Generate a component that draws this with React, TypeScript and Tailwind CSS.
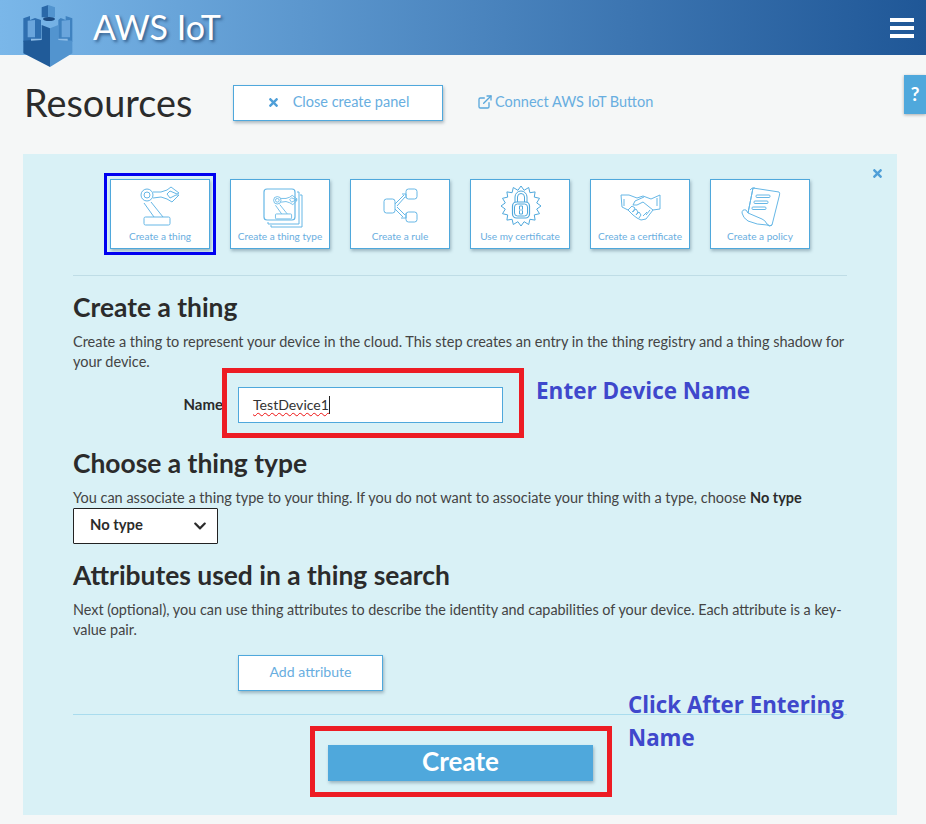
import React from "react";
import { FaTimes, FaChevronDown } from "react-icons/fa";
import { ExternalLink } from "lucide-react";

const font = { fontFamily: 'Lato, "Noto Sans", sans-serif' };

function Logo() {
  return (
    <svg width="70" height="70" viewBox="0 0 210 210" className="absolute left-[15px] top-0">
      <polygon points="80,22 100,15 100,52 80,52" fill="#2a68a8" />
      <polygon points="100,15 120,22 120,52 100,52" fill="#5294cf" />
      <polygon points="25,55 45,48 45,60 60,54 78,60 78,120 25,125" fill="#2f6fb0" />
      <polygon points="172,55 152,48 152,60 137,54 130,60 130,120 172,125" fill="#3f82c0" />
      <polygon points="38,62 60,60 60,112 38,112" fill="#6aa5dc" />
      <polygon points="140,62 165,60 165,112 140,112" fill="#6aa5dc" />
      <polygon points="62,72 78,72 78,112 62,112" fill="#2f6fb0" />
      <ellipse cx="102" cy="57" rx="18" ry="6" fill="#1c4a80" />
      <polygon points="25,122 80,118 80,75 105,85 105,201 25,160" fill="#205b99" />
      <polygon points="105,85 130,75 130,118 172,122 172,160 105,201" fill="#5294cf" />
      <polygon points="48,116 80,116 80,120 48,122" fill="#8fbde6" />
      <polygon points="130,116 158,116 158,122 130,120" fill="#8fbde6" />
    </svg>
  );
}

function RobotIcon() {
  return (
    <g fill="none">
      <circle cx="36" cy="15" r="6" />
      <circle cx="36" cy="15" r="3" />
      <path d="M42 12 L50 12 L56 10 L60 7 L68 13 L66 14 L59 11 L56 14 L59 18 L65 15 L68 15 L61 22 L56 19 L50 17 L42 18" />
      <path d="M33 23 L43 37 M40 22 L52 37" />
      <rect x="33" y="37" width="26" height="8" rx="1.5" />
    </g>
  );
}

function TileIcon({ kind }: { kind: string }) {
  const star = Array.from({ length: 32 }, (_, i) => {
    const a = (i * Math.PI) / 16;
    const r = i % 2 === 0 ? 20 : 16;
    return `${(50 + r * Math.sin(a)).toFixed(1)},${(26 - r * Math.cos(a)).toFixed(1)}`;
  }).join(" ");
  return (
    <svg width="100" height="52" viewBox="0 0 100 52" stroke="#66b7e6" strokeWidth="1" fill="none" className="block">
      {kind === "thing" && <RobotIcon />}
      {kind === "type" && (
        <g>
          <path d="M66 12 L68 12 L68 44 L37 44 L37 42" />
          <path d="M69 15 L71 15 L71 47 L40 47 L40 45" />
          <rect x="33" y="9" width="31" height="31" rx="3" strokeWidth="1.2" />
          <g transform="translate(24 11) scale(0.62)" strokeWidth="1.4">
            <RobotIcon />
          </g>
        </g>
      )}
      {kind === "rule" && (
        <g>
          <rect x="33" y="19" width="11" height="14" rx="2.5" />
          <rect x="55" y="9" width="11" height="10" rx="2.5" />
          <rect x="55" y="32" width="11" height="10" rx="2.5" />
          <path d="M44 24 L53 15 M46 26 L54 17 M51 14 L55 14 L55 18 M46 27 L54 35 M44 29 L52 37 M55 33 L55 38 L50 38" />
        </g>
      )}
      {kind === "cert" && (
        <g stroke="#4fa8dc">
          <polygon points={star} />
          <rect x="41.5" y="22" width="17" height="16" rx="4" strokeWidth="1.2" />
          <rect x="43.5" y="24" width="13" height="12" rx="3" />
          <path d="M44 22 V17 a6 6 0 0 1 12 0 V22 M46.5 22 V17 a3.5 3.5 0 0 1 7 0 V22" />
          <path d="M48.5 26 h3 v3 l-.7 1 .7 1 v3 h-3 v-3 l.7 -1 -.7 -1 z" />
        </g>
      )}
      {kind === "hand" && (
        <g>
          <path d="M30 15 L38 15 L46 18 L52 16 L60 19 L69 15 L69 29 L62 30 L55 39 L50 40 L46 38 L42 35 L37 30 L31 27 Z" />
          <path d="M33 19 L33 26 M66 18 L66 26" />
          <path d="M53 17 L44 21 L42 25 L46 25 L52 22 L62 30" />
          <path d="M37 30 L41 26 L44 28 L42 32 M41 32 L45 29 L47 32 L45 35 M45 35 L48 32 L50 35 L48 38 M56 32 L52 36 M59 30 L55 35" />
        </g>
      )}
      {kind === "policy" && (
        <g>
          <path d="M42 8 L68 12 Q69 13 68.5 15 L61 45 Q59 47 56 44 Q54 40 51 39 L37 33 Z" />
          <path d="M39 10 Q41 7 44 8 M42 8 L37 33 L35 30 Q31 29 31 33 Q32 38 37 41 Q46 45 56 45 Q59 47 61 45" />
          <rect x="45" y="15" width="14" height="2.5" rx="1" />
          <rect x="43" y="21" width="14" height="2.5" rx="1" />
          <rect x="41" y="27" width="14" height="2.5" rx="1" />
        </g>
      )}
    </svg>
  );
}

function Tile({ kind, label, selected }: { kind: string; label: string; selected?: boolean }) {
  return (
    <div className="relative w-[100px] h-[70px] bg-white border border-[#4fa8dc] shadow-[1px_2px_3px_rgba(60,90,110,0.4)] flex flex-col">
      <TileIcon kind={kind} />
      <div className="text-[10.1px] leading-[14px] mt-[-3px] text-center text-[#6aaee0] whitespace-nowrap">{label}</div>
      {selected && <div className="absolute left-[-7px] top-[-7px] w-[112px] h-[82px] border-[3px] border-[#0000f0]" />}
    </div>
  );
}

const annot = { fontFamily: '"Open Sans", "Noto Sans", sans-serif' };

export default function App() {
  return (
    <div style={font} className="relative w-[926px] h-[824px] overflow-hidden bg-[#f5f7f7] text-[#2b2b2b]">
      <header className="relative h-[55px] flex items-center justify-between pl-[93px] pr-[12px] bg-gradient-to-r from-[#7ab7e9] to-[#1f5797]">
        <Logo />
        <div className="text-[34px] leading-[40px] text-white [text-shadow:2px_2px_3px_rgba(20,50,90,0.6)] pb-[2px]">AWS IoT</div>
        <div className="flex flex-col gap-[4px]">
          <div className="w-[24px] h-[4px] bg-white" />
          <div className="w-[24px] h-[4px] bg-white" />
          <div className="w-[24px] h-[4px] bg-white" />
        </div>
      </header>

      <div className="absolute right-0 top-[75px] w-[22px] h-[39px] bg-[#4fa8dc] shadow-[0_1px_3px_rgba(0,0,0,0.3)] flex items-center justify-center text-white font-bold text-[19px]">?</div>

      <div className="flex items-center h-[36px] mt-[30px] ml-[24px]">
        <h1 className="w-[209px] text-[37.8px] leading-[40px] text-[#2b2b2b]">Resources</h1>
        <button className="w-[210px] h-[36px] bg-white border border-[#4fa8dc] shadow-[1px_2px_3px_rgba(60,90,110,0.4)] flex items-center justify-center gap-[13px] text-[14.5px] pb-[2px] text-[#68aee0]">
          <FaTimes className="text-[#4f9fd8] text-[13px]" />
          <span>Close create panel</span>
        </button>
        <a className="ml-[34px] flex items-center gap-[2px] text-[14.5px] pb-[2px] text-[#68aee0]">
          <ExternalLink size={16} strokeWidth={2} className="text-[#5aa8dc]" />
          <span>Connect AWS IoT Button</span>
        </a>
      </div>

      <main className="relative mt-[33px] mx-[23px] w-[874px] h-[661px] bg-[#d9f1f6] px-[50px] pt-[25px]">
        <FaTimes className="absolute left-[848px] top-[13px] text-[#4f9fd8] text-[13px]" />
        <div className="flex justify-center gap-[20px]">
          <Tile kind="thing" label="Create a thing" selected />
          <Tile kind="type" label="Create a thing type" />
          <Tile kind="rule" label="Create a rule" />
          <Tile kind="cert" label="Use my certificate" />
          <Tile kind="hand" label="Create a certificate" />
          <Tile kind="policy" label="Create a policy" />
        </div>
        <hr className="mt-[26px] border-0 h-px bg-[#bfdde6]" />

        <h2 className="mt-[17px] h-[30px] text-[26.4px] leading-[28px] font-bold">Create a thing</h2>
        <p className="mt-[9px] text-[14.5px] leading-[20px] text-[#444]">
          Create a thing to represent your device in the cloud. This step creates an entry in the thing registry and a thing shadow for your device.
        </p>

        <div className="relative mt-[15px] flex items-center gap-[15px]">
          <label className="w-[150px] text-right text-[15px] font-bold pb-[2px]">Name</label>
          <div className="w-[265px] h-[36px] bg-white border border-[#4fa8dc] pl-[14px] flex items-center text-[14.1px] text-[#333]">
            <span className="underline decoration-wavy decoration-[#e11] decoration-1 underline-offset-2">TestDevice1</span>
            <span className="w-px h-[18px] bg-[#222]" />
          </div>
          <div className="absolute left-[149px] top-[-19px] w-[302px] h-[70px] border-[5px] border-[#ed1c24]" />
          <div style={annot} className="absolute left-[463px] top-[-13px] text-[22.5px] leading-[34px] font-bold text-[#3f48cc] whitespace-nowrap">Enter Device Name</div>
        </div>

        <h2 className="mt-[26px] h-[30px] text-[26.4px] leading-[28px] font-bold">Choose a thing type</h2>
        <p className="mt-[9px] text-[14.5px] leading-[20px] text-[#444]">
          You can associate a thing type to your thing. If you do not want to associate your thing with a type, choose <b className="text-[#2b2b2b]">No type</b>
        </p>
        <div className="w-[145px] h-[36px] bg-white border border-[#222] rounded-[1px] flex items-center justify-between pl-[16px] pr-[10px] text-[14.8px] font-bold">
          <span className="pb-[3px]">No type</span>
          <FaChevronDown className="text-[14px]" />
        </div>

        <h2 className="mt-[17px] h-[30px] text-[26.4px] leading-[28px] font-bold">Attributes used in a thing search</h2>
        <p className="mt-[9px] text-[14.4px] leading-[20px] text-[#444]">
          Next (optional), you can use thing attributes to describe the identity and capabilities of your device. Each attribute is a key-value pair.
        </p>
        <button className="mt-[15px] ml-[165px] block w-[145px] h-[36px] bg-white border border-[#4fa8dc] shadow-[1px_2px_3px_rgba(60,90,110,0.4)] text-[14.1px] pb-[2px] text-[#68aee0]">Add attribute</button>

        <hr className="mt-[23px] border-0 h-px bg-[#a9dcee]" />

        <div className="relative mt-[30px] w-[265px] ml-[255px]">
          <button className="block w-[265px] h-[36px] bg-[#4fa8dc] shadow-[1px_2px_3px_rgba(60,90,110,0.4)] text-white text-[26px] leading-[33px] pb-[3px] font-bold">Create</button>
          <div className="absolute left-[-18px] top-[-19px] w-[302px] h-[71px] border-[5px] border-[#ed1c24]" />
          <div style={annot} className="absolute left-[300px] top-[-57px] w-[240px] text-[22.3px] leading-[33px] font-bold text-[#3f48cc]">Click After Entering Name</div>
        </div>
      </main>
    </div>
  );
}
